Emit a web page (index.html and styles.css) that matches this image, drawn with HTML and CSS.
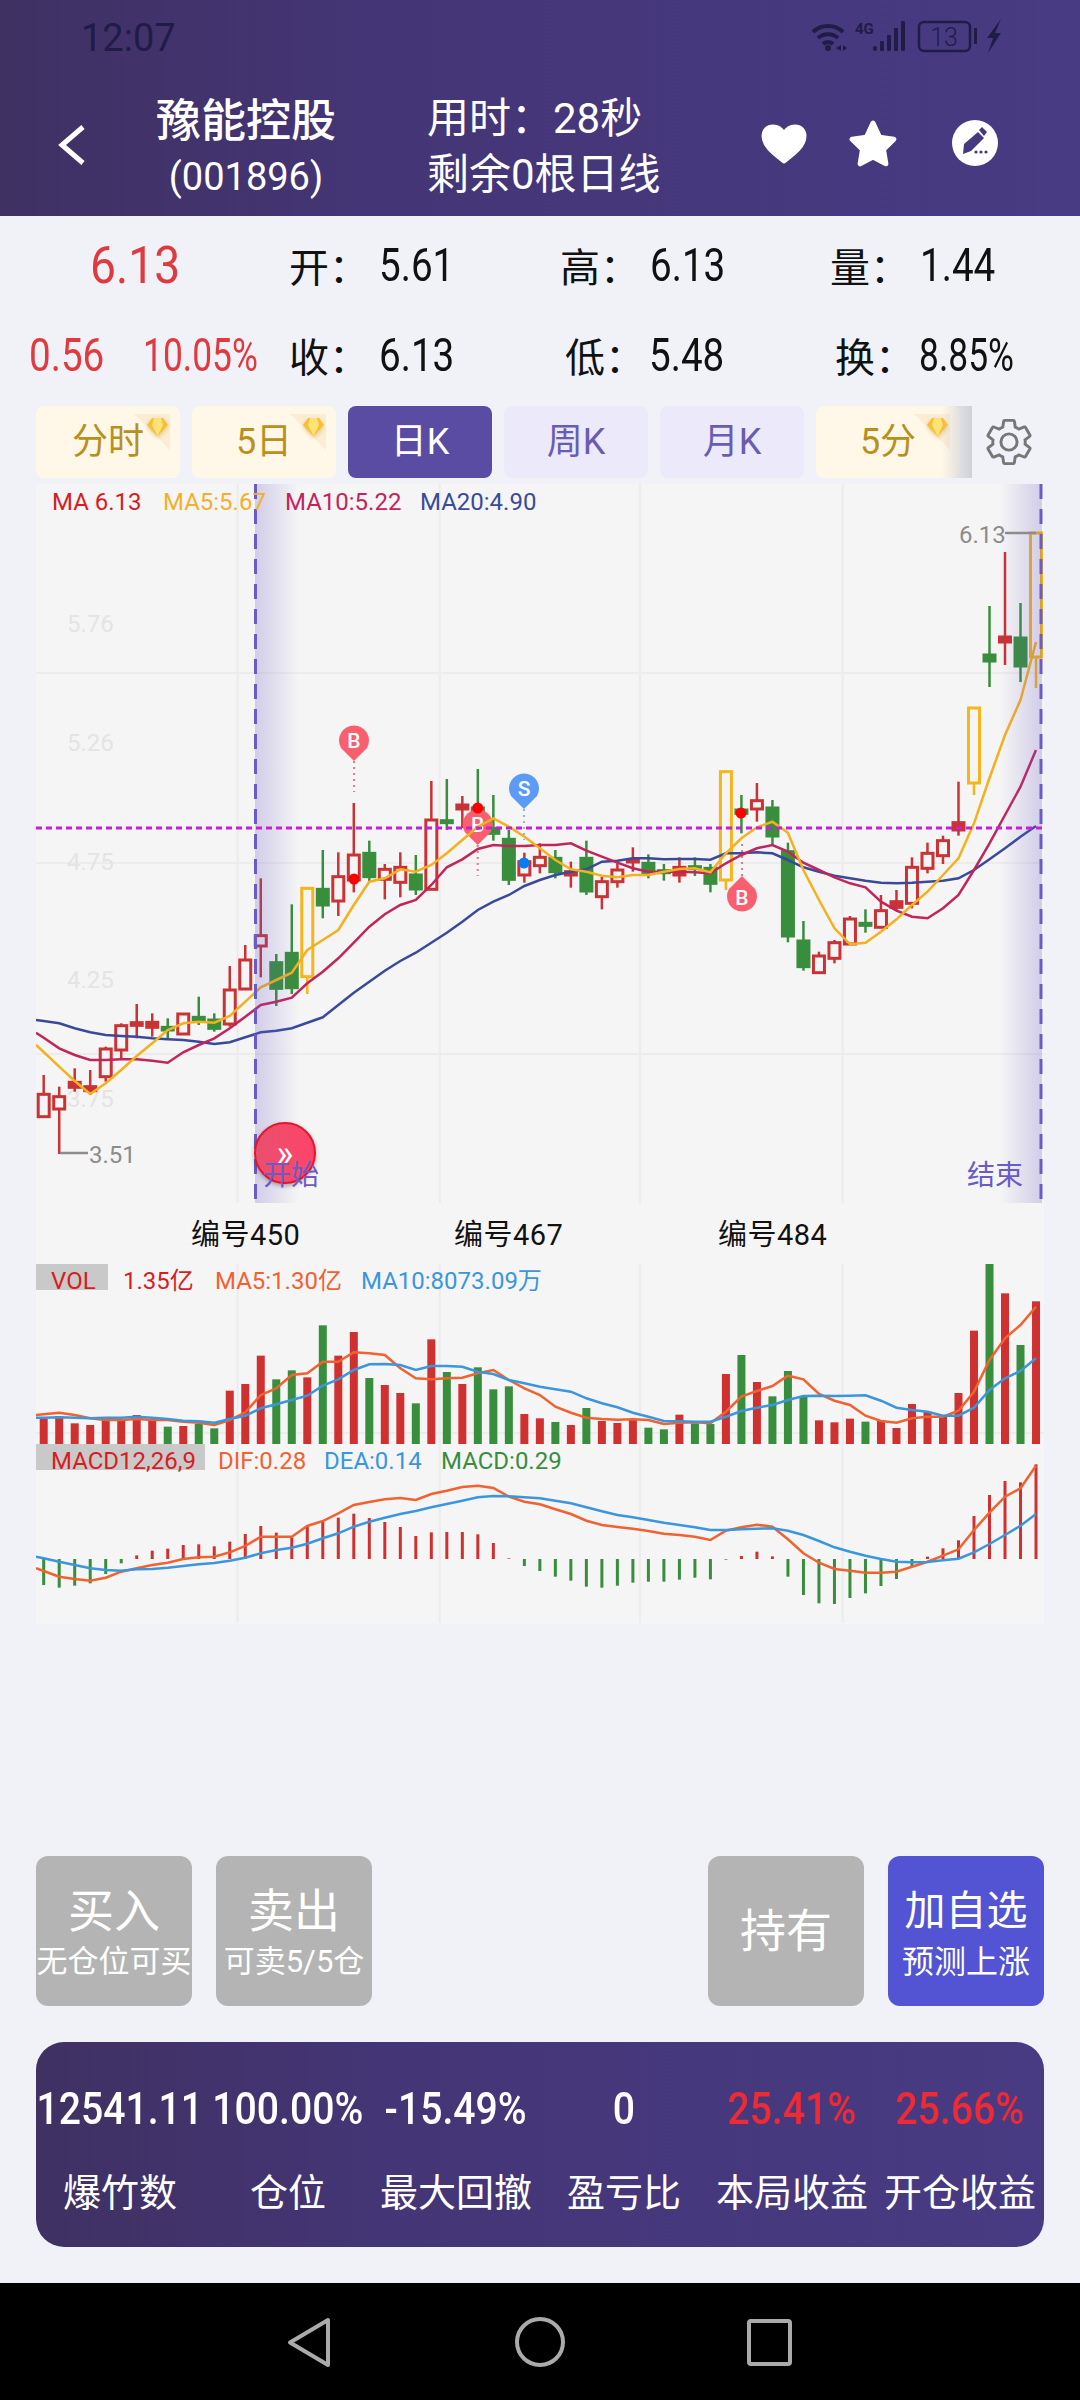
FILE: index.html
```html
<!DOCTYPE html>
<html lang="zh-CN">
<head>
    <meta charset="UTF-8">
    <meta name="viewport" content="width=device-width, initial-scale=1.0">
    <title>豫能控股</title>
    <link rel="stylesheet" href="styles.css">
</head>
<body>
    <!-- Header -->
    <header class="header">
        <div class="status-bar">
            <span class="clock">12:07</span>
            <svg class="status-icons" viewBox="808 16 198 42">
                <path class="status-line" d="M815 32a22 22 0 0 1 30 0M820 38a15 15 0 0 1 20 0M825 44a7 7 0 0 1 10 0"/>
                <circle class="status-fill" cx="830" cy="48" r="3"/>
                <path class="status-fill" d="M843 45v6l-5-3zM845 45v6l4-3z"/>
                <text class="status-4g" x="857" y="34">4G</text>
                <rect class="status-fill" x="875" y="46" width="4" height="5" rx="2"/>
                <rect class="status-fill" x="882" y="41" width="4" height="10" rx="1"/>
                <rect class="status-fill" x="889" y="35" width="4" height="16" rx="1"/>
                <rect class="status-fill" x="896" y="28" width="4" height="23" rx="1"/>
                <rect class="status-fill" x="903" y="21" width="4" height="30" rx="1"/>
                <rect class="status-line thin" x="921" y="22" width="51" height="29" rx="5"/>
                <text class="status-battery" x="946" y="46">13</text>
                <rect class="status-fill" x="976" y="28" width="3" height="16" rx="1"/>
                <path class="status-fill" d="M1003 19l-14 19h6l-5 15 13-20h-6z"/>
            </svg>
        </div>
        <div class="title-bar">
            <svg class="back-icon" viewBox="0 0 28 40"><path d="M25 2L4 20l21 18"/></svg>
            <div class="stock-name">
                <div class="stock-title">豫能控股</div>
                <div class="stock-code">(001896)</div>
            </div>
            <div class="game-info">
                <div>用时：28秒</div>
                <div>剩余0根日线</div>
            </div>
            <div class="header-actions">
                <svg class="icon-heart" viewBox="0 0 46 40"><path d="M23 38C14 31 2 23 2 12 2 6 6 2 12 2c5 0 9 3 11 7 2-4 6-7 11-7 6 0 10 4 10 10 0 11-12 19-21 26z"/></svg>
                <svg class="icon-star" viewBox="0 0 50 48"><path d="M25 3L31.500 17.100 45.900 19.200 35.500 29.400 37.900 43.800 25 37 12.100 43.800 14.500 29.400 4.100 19.200 18.500 17.100z"/></svg>
                <svg class="icon-edit" viewBox="0 0 46 46">
                    <circle class="edit-disc" cx="23" cy="23" r="23"/>
                    <path class="edit-pen" d="M11 34l1-10 14-12 6 6-13 13zM27 10l3-3 5 5-3 4z"/>
                    <circle class="edit-pen" cx="24" cy="32" r="1.600"/>
                    <circle class="edit-pen" cx="29" cy="32" r="1.600"/>
                    <circle class="edit-pen" cx="34" cy="32" r="1.600"/>
                </svg>
            </div>
        </div>
    </header>

    <!-- Quote -->
    <section class="quote">
        <div class="quote-row">
            <div class="last-price"><span class="num">6.13</span></div>
            <div class="quote-item"><span class="quote-label">开：</span><span class="num">5.61</span></div>
            <div class="quote-item"><span class="quote-label">高：</span><span class="num">6.13</span></div>
            <div class="quote-item"><span class="quote-label">量：</span><span class="num">1.44</span></div>
        </div>
        <div class="quote-row">
            <div class="price-change"><span class="num">0.56</span><span class="num pct">10.05%</span></div>
            <div class="quote-item"><span class="quote-label">收：</span><span class="num">6.13</span></div>
            <div class="quote-item nudge"><span class="quote-label">低：</span><span class="num">5.48</span></div>
            <div class="quote-item nudge"><span class="quote-label">换：</span><span class="num pct">8.85%</span></div>
        </div>
    </section>

    <!-- Period tabs -->
    <nav class="tabs">
        <div class="tab-list">
            <div class="tab tab-locked">分时<svg class="gem" viewBox="0 0 38 36"><path class="gem-corner" d="M0 0H36V36z"/><path class="gem-stone" d="M18 4h11l5 7-10.500 11L13 11z"/><path class="gem-facet" d="M20 4h7l2 7-5.500 11L18 11z"/></svg></div>
            <div class="tab tab-locked">5日<svg class="gem" viewBox="0 0 38 36"><path class="gem-corner" d="M0 0H36V36z"/><path class="gem-stone" d="M18 4h11l5 7-10.500 11L13 11z"/><path class="gem-facet" d="M20 4h7l2 7-5.500 11L18 11z"/></svg></div>
            <div class="tab tab-active">日K</div>
            <div class="tab">周K</div>
            <div class="tab">月K</div>
            <div class="tab tab-locked">5分<svg class="gem" viewBox="0 0 38 36"><path class="gem-corner" d="M0 0H36V36z"/><path class="gem-stone" d="M18 4h11l5 7-10.500 11L13 11z"/><path class="gem-facet" d="M20 4h7l2 7-5.500 11L18 11z"/></svg></div>
        </div>
        <svg class="gear" viewBox="0 0 24 24"><path d="M19.14 12.94c.04-.3.06-.61.06-.94 0-.32-.02-.64-.07-.94l2.03-1.58c.18-.14.23-.41.12-.61l-1.92-3.32c-.12-.22-.37-.29-.59-.22l-2.39.96c-.5-.38-1.03-.7-1.62-.94l-.36-2.54c-.04-.24-.24-.41-.48-.41h-3.84c-.24 0-.43.17-.47.41l-.36 2.54c-.59.24-1.13.57-1.62.94l-2.39-.96c-.22-.08-.47 0-.59.22L2.74 8.87c-.12.21-.08.47.12.61l2.03 1.58c-.05.3-.09.63-.09.94s.02.64.07.94l-2.03 1.58c-.18.14-.23.41-.12.61l1.92 3.32c.12.22.37.29.59.22l2.39-.96c.5.38 1.03.7 1.62.94l.36 2.54c.05.24.24.41.48.41h3.84c.24 0 .44-.17.47-.41l.36-2.54c.59-.24 1.13-.56 1.62-.94l2.39.96c.22.08.47 0 .59-.22l1.92-3.32c.12-.22.07-.47-.12-.61l-2.01-1.58zM12 15.6c-1.98 0-3.6-1.62-3.6-3.6s1.62-3.6 3.6-3.6 3.6 1.62 3.6 3.6-1.62 3.6-3.6 3.6z"/></svg>
    </nav>

    <!-- Chart: the viewBox uses page coordinates, chart.js fills the groups -->
    <svg class="chart" id="chart" viewBox="36 484 1008 1140">
        <defs>
            <linearGradient id="shade-left"><stop offset="0" stop-color="#6a5cc4" stop-opacity=".26"/><stop offset="1" stop-color="#6a5cc4" stop-opacity="0"/></linearGradient>
            <linearGradient id="shade-right"><stop offset="0" stop-color="#6a5cc4" stop-opacity="0"/><stop offset="1" stop-color="#6a5cc4" stop-opacity=".26"/></linearGradient>
            <linearGradient id="skip-fill"><stop offset="0" stop-color="#e8506f"/><stop offset="1" stop-color="#ff4468"/></linearGradient>
        </defs>
        <g id="grid"></g>
        <g class="axis-labels">
            <text x="67" y="632">5.76</text>
            <text x="67" y="751">5.26</text>
            <text x="67" y="870">4.75</text>
            <text x="67" y="988">4.25</text>
            <text x="67" y="1107">3.75</text>
        </g>
        <g id="candles"></g>
        <g id="pins"></g>
        <g id="ma-lines"></g>
        <rect x="255" y="484" width="44" height="719" fill="url(#shade-left)"/>
        <rect x="1000" y="484" width="42" height="719" fill="url(#shade-right)"/>
        <path class="range-line" d="M255.5 484V1203M1041 484V1203"/>
        <path class="price-line" d="M36 828H1044"/>
        <path class="extreme-line" d="M1005 533H1036M60 1153H88"/>
        <g class="chart-text">
            <text class="extreme" x="959" y="543">6.13</text>
            <text class="extreme" x="89" y="1163">3.51</text>
            <text class="c-red" x="52" y="510">MA 6.13</text>
            <text class="c-yellow" x="163" y="510">MA5:5.67</text>
            <text class="c-rose" x="285" y="510">MA10:5.22</text>
            <text class="c-navy" x="420" y="510">MA20:4.90</text>
        </g>
        <circle class="skip-btn" cx="285" cy="1153" r="30"/>
        <text class="skip-arrow" x="285" y="1166">»</text>
        <text class="range-label" x="263" y="1185">开始</text>
        <text class="range-label" x="967" y="1185">结束</text>
        <g class="serial">
            <text x="191" y="1245">编号450</text>
            <text x="454" y="1245">编号467</text>
            <text x="718" y="1245">编号484</text>
        </g>
        <rect class="tag-bg" x="36" y="1264" width="72" height="26"/>
        <rect class="tag-bg" x="36" y="1444" width="169" height="26"/>
        <g id="volume"></g>
        <g id="macd"></g>
        <g class="chart-text">
            <text class="c-red" x="51" y="1289">VOL</text>
            <text class="c-red" x="123" y="1289">1.35亿</text>
            <text class="c-orange" x="215" y="1289">MA5:1.30亿</text>
            <text class="c-blue" x="361" y="1289">MA10:8073.09万</text>
            <text class="c-red" x="51" y="1469">MACD12,26,9</text>
            <text class="c-orange" x="218" y="1469">DIF:0.28</text>
            <text class="c-blue" x="324" y="1469">DEA:0.14</text>
            <text class="c-green" x="441" y="1469">MACD:0.29</text>
        </g>
    </svg>

    <!-- Trade buttons -->
    <section class="actions">
        <div class="action-group">
            <div class="action-btn"><span class="action-main">买入</span><span class="action-sub">无仓位可买</span></div>
            <div class="action-btn"><span class="action-main">卖出</span><span class="action-sub">可卖5/5仓</span></div>
        </div>
        <div class="action-group">
            <div class="action-btn"><span class="action-main">持有</span></div>
            <div class="action-btn action-watch"><span class="action-main">加自选</span><span class="action-sub">预测上涨</span></div>
        </div>
    </section>

    <!-- Score panel -->
    <section class="score">
        <div class="score-item"><span class="score-num">12541.11</span><span class="score-label">爆竹数</span></div>
        <div class="score-item"><span class="score-num">100.00%</span><span class="score-label">仓位</span></div>
        <div class="score-item"><span class="score-num">-15.49%</span><span class="score-label">最大回撤</span></div>
        <div class="score-item"><span class="score-num">0</span><span class="score-label">盈亏比</span></div>
        <div class="score-item"><span class="score-num gain">25.41%</span><span class="score-label">本局收益</span></div>
        <div class="score-item"><span class="score-num gain">25.66%</span><span class="score-label">开仓收益</span></div>
    </section>

    <!-- Android nav bar -->
    <footer class="nav-bar">
        <svg class="nav-icons" viewBox="280 2310 520 62">
            <path d="M328 2319v45l-38-22.500z"/>
            <circle cx="540" cy="2341" r="23"/>
            <rect x="749" y="2320" width="41" height="43" rx="2"/>
        </svg>
    </footer>

    <script src="chart.js"></script>
</body>
</html>
```

FILE: styles.css
```css
* {
    box-sizing: border-box;
}
body {
    width: 1080px;
    height: 2400px;
    margin: 0;
    overflow: hidden;
    background-color: #f0f2f8;
    font-family: Roboto, "Noto Sans CJK SC", sans-serif;
    color: #111;
}

/* Header */
.header {
    height: 216px;
    color: white;
    background: linear-gradient(90deg, #3f3162, #443576 35%, #483b83);
}
.status-bar {
    height: 93px;
    display: flex;
    justify-content: space-between;
    padding: 16px 76px 0 81px;
}
.clock {
    font-size: 38px;
    line-height: 44px;
    color: #1f1c45;
}
.status-icons {
    width: 198px;
    height: 42px;
}
.status-line {
    fill: none;
    stroke: #1f1c45;
    stroke-width: 4;
}
.status-line.thin {
    stroke-width: 2.5;
}
.status-fill {
    fill: #1f1c45;
}
.status-4g {
    font-size: 15px;
    font-weight: bold;
    fill: #1f1c45;
}
.status-battery {
    font-size: 25px;
    font-weight: 300;
    text-anchor: middle;
    fill: #1f1c45;
}
.title-bar {
    display: flex;
    align-items: flex-start;
}
.back-icon {
    width: 28px;
    height: 40px;
    margin: 32px 0 0 58px;
    fill: none;
    stroke: white;
    stroke-width: 5;
}
.stock-name {
    width: 220px;
    margin-left: 50px;
    text-align: center;
}
.stock-title {
    font-size: 45px;
    font-weight: 500;
    line-height: 58px;
}
.stock-code {
    font-size: 38px;
    line-height: 52px;
}
.game-info {
    margin: -2px 0 0 71px;
    font-size: 42px;
    line-height: 56px;
}
.header-actions {
    display: flex;
    margin: 27px 82px 0 auto;
    fill: white;
}
.icon-heart {
    width: 46px;
    height: 40px;
    margin-top: 4px;
    stroke: white;
    stroke-width: 3;
    stroke-linejoin: round;
}
.icon-star {
    width: 50px;
    height: 48px;
    margin-left: 41px;
    stroke: white;
    stroke-width: 5;
    stroke-linejoin: round;
}
.icon-edit {
    width: 46px;
    height: 46px;
    margin-left: 54px;
}
.edit-disc {
    fill: white;
}
.edit-pen {
    fill: #46397f;
}

/* Quote */
.quote {
    padding-top: 4px;
}
.quote-row {
    height: 90px;
    display: grid;
    grid-template-columns: 289px 271px 270px 1fr;
    align-items: center;
}
/* the app's digits are much narrower than Roboto */
.num {
    display: inline-block;
    font-size: 46px;
    transform: scaleX(.84);
    transform-origin: left center;
}
.num.pct {
    transform: scaleX(.77);
}
.last-price {
    padding-left: 90px;
    color: #de3a3f;
}
.last-price .num {
    font-size: 52px;
    transform: scaleX(.89);
}
.price-change {
    display: flex;
    gap: 24px;
    padding-left: 29px;
    color: #de3a3f;
}
.quote-item {
    display: flex;
    align-items: center;
}
.quote-item.nudge {
    padding-left: 5px;
}
.quote-label {
    width: 90px;
    font-size: 40px;
}
.nudge .quote-label {
    width: 84px;
}

/* Period tabs */
.tabs {
    display: flex;
    align-items: center;
    margin: 6px 0 0 36px;
}
.tab-list {
    position: relative;
    width: 936px;
    height: 72px;
    display: flex;
    gap: 12px;
    overflow: hidden;
}
.tab-list::after {
    content: "";
    position: absolute;
    top: 0;
    right: 0;
    width: 30px;
    height: 72px;
    background: linear-gradient(90deg, rgba(236,236,236,0), #cfd1d6);
}
.tab {
    position: relative;
    flex: 0 0 144px;
    border-radius: 8px;
    text-align: center;
    font-size: 36px;
    line-height: 72px;
    color: #6a5cb0;
    background: #ece9fb;
}
.tab-active {
    color: white;
    background: #5b4ca3;
}
.tab-locked {
    color: #b8901c;
    background: #fff8e8;
}
.gem {
    position: absolute;
    top: 8px;
    right: 8px;
    width: 38px;
    height: 36px;
}
.gem-corner {
    fill: #fcecd2;
}
.gem-stone {
    fill: #f6c02e;
    filter: drop-shadow(0 2px 2px rgba(190,140,40,0.4));
}
.gem-facet {
    fill: #fde27a;
}
.gear {
    width: 54px;
    height: 54px;
    margin-left: 10px;
    fill: none;
    stroke: #777;
    stroke-width: 1.3;
}

/* Chart */
.chart {
    display: block;
    width: 1008px;
    height: 1140px;
    margin: 6px 0 0 36px;
    background: #f5f5f5;
    font-family: Roboto, "Noto Sans CJK SC", sans-serif;
}
.grid-line {
    stroke: #ececec;
    stroke-width: 2;
}
.axis-labels {
    font-size: 24px;
    fill: #e4e4e4;
}
.chart-text {
    font-size: 24px;
}
.wick {
    stroke-width: 2.5;
}
.body {
    stroke-width: 3;
    fill: #f5f5f5;
}
.up { stroke: #c93335; }
.down { stroke: #388e3c; }
.mid { stroke: #f5b51b; }
.body.solid.up { fill: #c93335; }
.body.solid.down { fill: #388e3c; }
.bar.up { fill: #cf3030; stroke: none; }
.bar.down { fill: #388e3c; stroke: none; }
.line {
    fill: none;
    stroke-width: 2.5;
}
.l-yellow { stroke: #f5b01d; }
.l-rose { stroke: #c2255c; }
.l-navy { stroke: #3a4a9a; }
.l-orange { stroke: #f0622f; }
.l-blue { stroke: #3a96dd; }
.c-red { fill: #d81c1f; }
.c-yellow { fill: #f3b02c; }
.c-rose { fill: #c2255c; }
.c-navy { fill: #3a4a9a; }
.c-orange { fill: #f0622f; }
.c-blue { fill: #3a96dd; }
.c-green { fill: #388e3c; }
.range-line {
    fill: none;
    stroke: #6a5cc4;
    stroke-width: 3;
    stroke-dasharray: 15 10;
}
.price-line {
    stroke: #c61fd8;
    stroke-width: 3;
    stroke-dasharray: 6 4;
}
.extreme-line {
    fill: none;
    stroke: #8c8c8c;
    stroke-width: 2.5;
}
.extreme {
    fill: #8c8c8c;
}
.pin-buy { fill: #f9606f; }
.pin-sell { fill: #5b9bf5; }
.pin-text {
    font-size: 21px;
    font-weight: 500;
    text-anchor: middle;
    fill: white;
}
.pin-stem {
    fill: none;
    stroke-width: 2;
    stroke-dasharray: 2 4;
}
.pin-stem.buy { stroke: #e67a85; }
.pin-stem.sell { stroke: #8db4ee; }
.dot-red { fill: #f00; }
.dot-blue { fill: #0a7af5; }
.skip-btn {
    fill: url(#skip-fill);
    stroke: #e8142a;
    stroke-width: 2;
    filter: drop-shadow(0 2px 2px rgba(0,0,0,0.3));
}
.skip-arrow {
    font-size: 36px;
    text-anchor: middle;
    fill: white;
}
.range-label {
    font-size: 28px;
    fill: #6a5cc4;
}
.serial {
    font-size: 29px;
    letter-spacing: .5px;
    fill: #111;
}
.tag-bg {
    fill: #c9c9c9;
}

/* Trade buttons */
.actions {
    display: flex;
    justify-content: space-between;
    margin: 232px 36px 0;
}
.action-group {
    display: flex;
    gap: 24px;
}
.action-btn {
    width: 156px;
    height: 150px;
    display: flex;
    flex-direction: column;
    justify-content: center;
    align-items: center;
    border-radius: 12px;
    color: white;
    background: #b4b4b4;
    white-space: nowrap;
}
.action-watch {
    background: #5254d4;
}
.action-main {
    font-size: 46px;
    line-height: 62px;
}
.action-sub {
    font-size: 31px;
    line-height: 40px;
}
.action-watch .action-main {
    font-size: 41px;
}
.action-watch .action-sub {
    font-size: 32px;
}

/* Score panel */
.score {
    height: 205px;
    display: grid;
    grid-template-columns: repeat(6, 168px);
    margin: 36px 36px 0;
    padding-top: 38px;
    border-radius: 28px;
    color: white;
    background: linear-gradient(90deg, #3f3162, #443576 35%, #483b83);
}
.score-item {
    display: flex;
    flex-direction: column;
    align-items: center;
    white-space: nowrap;
}
.score-num {
    font-size: 45px;
    font-weight: 500;
    line-height: 58px;
    transform: scaleX(.87);
}
.score-num.gain {
    color: #ee2a35;
}
.score-label {
    margin-top: 26px;
    font-size: 38px;
    line-height: 58px;
}

/* Nav bar */
.nav-bar {
    height: 118px;
    margin-top: 36px;
    padding: 28px 0 0 280px;
    background: black;
}
.nav-icons {
    display: block;
    width: 520px;
    height: 62px;
    fill: none;
    stroke: #aaa;
    stroke-width: 4;
    stroke-linejoin: round;
}
```

FILE: chart.js
```js
// Candles: [high, body top, body bottom, low, colour]. All y values are
// offsets from baseY in 1/3 px.
const baseY = 820;
const volY = 1240;

const candles = [
    [765, 823, 890, 890, 'up'], [800, 830, 867, 1002, 'up'], [745, 787, 802, 815, 'up'], [750, 800, 812, 825, 'up'],
    [680, 687, 770, 785, 'up'], [610, 617, 690, 715, 'up'], [552, 608, 616, 655, 'up'], [580, 607, 622, 650, 'up'],
    [595, 622, 630, 660, 'down'], [580, 582, 642, 642, 'up'], [530, 592, 600, 615, 'down'], [580, 600, 625, 635, 'down'],
    [438, 510, 612, 620, 'up'], [375, 420, 507, 507, 'up'], [175, 347, 378, 472, 'up'], [402, 428, 505, 558, 'down'],
    [253, 400, 503, 522, 'down'], [205, 205, 470, 522, 'mid'], [90, 208, 255, 295, 'down'], [97, 170, 243, 288, 'up'],
    [-51, 105, 180, 217, 'up'], [62, 100, 170, 185, 'down'], [132, 148, 178, 238, 'up'], [97, 142, 187, 232, 'up'],
    [105, 165, 207, 225, 'down'], [-117, 0, 208, 208, 'up'], [-123, 2, 8, 30, 'down'], [-72, -45, -33, 24, 'up'],
    [-153, -36, -28, 0, 'down'], [-75, 25, 40, 62, 'down'], [30, 58, 178, 195, 'down'], [98, 125, 165, 188, 'up'],
    [70, 112, 137, 160, 'up'], [90, 115, 155, 175, 'down'], [125, 155, 165, 203, 'up'], [62, 115, 213, 225, 'down'],
    [170, 185, 230, 268, 'up'], [130, 150, 185, 203, 'up'], [82, 119, 126, 155, 'up'], [103, 130, 158, 175, 'down'],
    [132, 152, 158, 182, 'down'], [112, 142, 165, 188, 'up'], [112, 140, 146, 168, 'down'], [132, 145, 190, 217, 'down'],
    [-145, -145, 180, 210, 'mid'], [-75, -30, -20, 40, 'down'], [-111, -58, -33, 5, 'up'], [-60, -36, 48, 75, 'down'],
    [68, 95, 348, 367, 'down'], [303, 363, 440, 452, 'down'], [395, 408, 458, 458, 'up'], [360, 368, 415, 430, 'up'],
    [288, 297, 372, 372, 'up'], [268, 310, 316, 338, 'down'], [225, 272, 322, 322, 'up'], [210, 245, 262, 272, 'up'],
    [112, 142, 250, 265, 'up'], [68, 100, 145, 160, 'up'], [47, 62, 107, 132, 'up'], [-115, 8, 30, 47, 'up'],
    [-336, -336, -111, -75, 'mid'], [-642, -495, -477, -399, 'down'], [-804, -549, -534, -465, 'up'],
    [-651, -546, -462, -414, 'down'], [-861, -861, -489, -396, 'mid']
];

const ma5 = [696, 740, 783, 822, 790, 750, 708, 670, 630, 610, 605, 608, 588, 545, 502, 480, 458, 390, 360, 330, 255, 185, 175, 148, 155, 135, 100, 60, 20, -5, 20, 50, 85, 120, 148, 155, 167, 172, 165, 165, 155, 147, 145, 157, 100, 55, 22, 5, 38, 150, 240, 325, 373, 368, 335, 298, 255, 215, 165, 115, 10, -126, -255, -360, -534];
const ma10 = [653, 685, 705, 720, 720, 718, 718, 722, 728, 697, 675, 655, 625, 590, 555, 545, 533, 490, 455, 415, 368, 320, 283, 255, 240, 195, 142, 118, 87, 75, 78, 78, 75, 75, 70, 92, 110, 128, 145, 155, 155, 155, 157, 160, 130, 105, 85, 75, 95, 128, 150, 172, 190, 202, 245, 272, 290, 295, 265, 225, 150, 70, -15, -100, -210];
const ma20 = [603, 610, 625, 637, 645, 648, 650, 655, 658, 660, 665, 672, 667, 652, 637, 632, 625, 608, 592, 555, 518, 485, 452, 423, 398, 368, 338, 305, 270, 245, 225, 198, 180, 165, 155, 148, 125, 122, 115, 115, 118, 117, 117, 119, 100, 100, 97, 100, 120, 142, 155, 167, 175, 182, 188, 190, 188, 185, 182, 175, 150, 118, 85, 50, 18];

// Lower panels use offsets from volY
const volTops = [535, 528, 550, 555, 540, 538, 525, 540, 560, 558, 552, 565, 452, 432, 347, 418, 391, 412, 256, 347, 276, 414, 435, 459, 490, 298, 396, 432, 382, 448, 439, 522, 535, 546, 555, 504, 543, 549, 538, 563, 568, 524, 550, 552, 402, 345, 426, 469, 393, 468, 541, 547, 536, 545, 542, 564, 492, 515, 527, 459, 272, 72, 160, 315, 184];
const volMa5 = [523, 518, 525, 535, 540, 540, 537, 540, 540, 545, 548, 555, 540, 517, 465, 445, 405, 400, 365, 365, 337, 340, 345, 385, 415, 418, 415, 413, 400, 390, 420, 445, 465, 500, 518, 533, 537, 539, 538, 540, 552, 548, 547, 550, 515, 470, 453, 438, 407, 418, 462, 482, 495, 527, 543, 548, 535, 530, 530, 512, 455, 360, 295, 255, 200];
const volMa10 = [533, 532, 533, 535, 533, 533, 530, 533, 537, 542, 544, 548, 537, 527, 505, 493, 480, 467, 437, 418, 390, 373, 372, 375, 390, 378, 378, 380, 395, 402, 420, 430, 440, 448, 455, 475, 490, 502, 518, 530, 543, 544, 545, 545, 530, 513, 503, 495, 480, 468, 467, 468, 467, 466, 482, 503, 510, 515, 527, 527, 503, 450, 415, 393, 355];
const macdEnds = [1035, 1043, 1037, 1030, 1002, 970, 946, 932, 926, 915, 913, 919, 905, 882, 858, 878, 892, 858, 845, 833, 821, 834, 846, 861, 888, 877, 876, 876, 883, 909, 955, 978, 993, 1010, 1022, 1040, 1043, 1037, 1028, 1025, 1025, 1019, 1013, 1018, 959, 948, 935, 949, 1010, 1065, 1090, 1092, 1074, 1060, 1038, 1017, 978, 950, 925, 901, 828, 765, 723, 727, 673];
const dif = [993, 1010, 1017, 1022, 1013, 995, 985, 975, 968, 957, 952, 950, 937, 918, 890, 890, 890, 858, 843, 820, 795, 786, 778, 774, 780, 762, 752, 741, 737, 744, 770, 785, 793, 808, 822, 842, 855, 861, 866, 873, 881, 885, 890, 900, 872, 862, 854, 860, 898, 940, 968, 987, 992, 998, 998, 995, 980, 965, 947, 928, 870, 818, 770, 745, 677];
const dea = [955, 965, 975, 985, 990, 992, 988, 987, 983, 978, 973, 969, 962, 953, 940, 930, 923, 911, 895, 880, 860, 845, 833, 822, 813, 802, 792, 782, 772, 768, 769, 772, 775, 782, 790, 802, 814, 825, 832, 840, 848, 855, 862, 870, 870, 868, 866, 865, 872, 885, 903, 922, 935, 947, 957, 965, 967, 966, 961, 956, 937, 912, 885, 857, 822];

const NS = 'http://www.w3.org/2000/svg';

function add(parent, tag, attrs, text) {
    const el = document.createElementNS(NS, tag);
    Object.keys(attrs).forEach(key => el.setAttribute(key, attrs[key]));
    if (text) el.textContent = text;
    document.getElementById(parent).appendChild(el);
}

const xAt = i => 43.7 + 15.505 * i;
const mainY = v => baseY + v / 3;
const lowY = v => volY + v / 3;

function drawLine(parent, values, toY, className, leftValue) {
    const points = values.map((v, i) => xAt(i).toFixed(1) + ',' + toY(v).toFixed(1));
    points.unshift('36,' + toY(leftValue).toFixed(1));
    add(parent, 'polyline', { class: 'line ' + className, points: points.join(' ') });
}

function drawPin(x, y, kind, label, flipped) {
    // y is the centre of the head, the tip sits 20px away
    const tip = flipped ? y - 21 : y + 21;
    const stemEnd = flipped ? tip - 33 : tip + 31;
    const cls = kind === 'buy' ? 'pin-buy' : 'pin-sell';
    add('pins', 'path', { class: 'pin-stem ' + kind, d: `M${x} ${tip}V${stemEnd}` });
    const side = flipped ? y - 8 : y + 8;
    add('pins', 'path', { class: cls, d: `M${x} ${tip}L${x - 13} ${side}A15 15 0 1 ${flipped ? 0 : 1} ${x + 13} ${side}Z` });
    add('pins', 'text', { class: 'pin-text', x: x, y: y + 8 }, label);
}

// grid
[237.6, 439.7, 640, 842.7].forEach(x => {
    add('grid', 'path', { class: 'grid-line', d: `M${x} 484V1203M${x} 1264V1623` });
});
[673, 863, 1054, 1433].forEach(y => {
    add('grid', 'path', { class: 'grid-line', d: `M36 ${y}H1044` });
});

// candles
candles.forEach((c, i) => {
    const x = xAt(i);
    add('candles', 'path', { class: 'wick ' + c[4], d: `M${x} ${mainY(c[0])}V${mainY(c[3])}` });
    const h = mainY(c[2]) - mainY(c[1]);
    const solid = c[4] === 'down' || h < 8;
    add('candles', 'rect', {
        class: 'body ' + c[4] + (solid ? ' solid' : ''),
        x: x - 5.5,
        y: mainY(c[1]),
        width: 11,
        height: h
    });
});

// buy and sell markers
drawPin(354, 740, 'buy', 'B', false);
drawPin(477.7, 824, 'buy', 'B', false);
drawPin(524, 788, 'sell', 'S', false);
drawPin(742, 897, 'buy', 'B', true);
add('pins', 'circle', { class: 'dot-red', cx: 354, cy: 879, r: 5.5 });
add('pins', 'circle', { class: 'dot-red', cx: 477.7, cy: 808, r: 5.5 });
add('pins', 'circle', { class: 'dot-red', cx: 741, cy: 813, r: 5.5 });
add('pins', 'circle', { class: 'dot-blue', cx: 524, cy: 863, r: 5.5 });

drawLine('ma-lines', ma20, mainY, 'l-navy', 600);
drawLine('ma-lines', ma10, mainY, 'l-rose', 638);
drawLine('ma-lines', ma5, mainY, 'l-yellow', 675);

// volume bars share their colour with the candle of the same index
volTops.forEach((top, i) => {
    const y = lowY(top);
    add('volume', 'rect', { class: 'bar ' + (candles[i][4] === 'down' ? 'down' : 'up'), x: xAt(i) - 4, y: y, width: 8, height: 1444 - y });
});
drawLine('volume', volMa5, lowY, 'l-orange', 525);
drawLine('volume', volMa10, lowY, 'l-blue', 533);

// macd histogram around the zero line
macdEnds.forEach((end, i) => {
    const y = lowY(end);
    const zero = lowY(957);
    add('macd', 'rect', {
        class: 'bar ' + (end > 957 ? 'down' : 'up'),
        x: xAt(i) - 1.5,
        y: Math.min(y, zero),
        width: 3,
        height: Math.abs(y - zero)
    });
});
drawLine('macd', dif, lowY, 'l-orange', 985);
drawLine('macd', dea, lowY, 'l-blue', 950);
```
